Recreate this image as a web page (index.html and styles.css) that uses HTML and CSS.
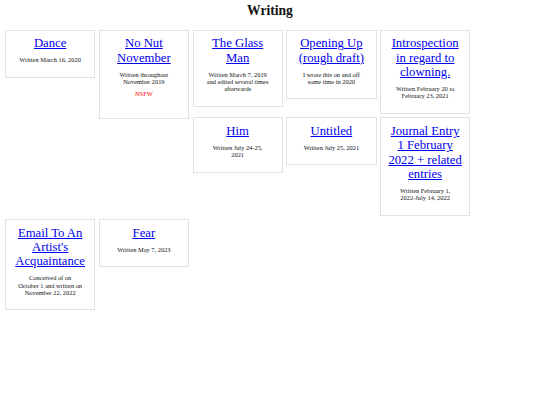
FILE: index.html
```html
<!DOCTYPE html>
<html lang="en">
<head>
    <meta charset="UTF-8">
    <meta name="viewport" content="width=device-width, initial-scale=1.0">
    <title>Writing</title>
    <link rel="stylesheet" href="styles.css">
</head>
<body>
    <h1>Writing</h1>

    <main class="pieces">
        <div class="piece">
            <a href="#" class="piece-title">Dance</a>
            <p class="piece-date">Written March 16, 2020</p>
        </div>
        <div class="piece">
            <a href="#" class="piece-title">No Nut November</a>
            <p class="piece-date">Written throughout<br>November 2019</p>
            <p class="nsfw">NSFW</p>
        </div>
        <div class="piece">
            <a href="#" class="piece-title">The Glass Man</a>
            <p class="piece-date">Written March 7, 2019<br>and edited several times<br>afterwards</p>
        </div>
        <div class="piece">
            <a href="#" class="piece-title">Opening Up (rough draft)</a>
            <p class="piece-date">I wrote this on and off<br>some time in 2020</p>
        </div>
        <div class="piece">
            <a href="#" class="piece-title">Introspection in regard to clowning.</a>
            <p class="piece-date">Written February 20 to<br>February 23, 2021</p>
        </div>
        <div class="piece">
            <a href="#" class="piece-title">Him</a>
            <p class="piece-date">Written July 24-25,<br>2021</p>
        </div>
        <div class="piece">
            <a href="#" class="piece-title">Untitled</a>
            <p class="piece-date">Written July 25, 2021</p>
        </div>
        <div class="piece">
            <a href="#" class="piece-title">Journal Entry 1 February 2022 + related entries</a>
            <p class="piece-date">Written February 1,<br>2022-July 14, 2022</p>
        </div>
        <div class="piece">
            <a href="#" class="piece-title">Email To An Artist's Acquaintance</a>
            <p class="piece-date">Conceived of on<br>October 1 and written on<br>November 22, 2022</p>
        </div>
        <div class="piece">
            <a href="#" class="piece-title">Fear</a>
            <p class="piece-date">Written May 7, 2023</p>
        </div>
    </main>
</body>
</html>
```

FILE: styles.css
```css
* {
    box-sizing: border-box;
}

body {
    margin: 0;
    font-family: "Liberation Serif", "Times New Roman", serif;
    color: #111;
    background-color: #fff;
}

h1 {
    font-size: 13.6px;
    line-height: 15.6px;
    text-align: center;
    margin: 2.7px 0 9.55px;
}

.pieces {
    padding: 0 3.25px;
}

.piece {
    float: left;
    width: 90.25px;
    margin: 1.75px;
    padding: 5.8px 6.4px 13.1px;
    border: 1px solid #e2e2e2;
    text-align: center;
}

.piece-title {
    display: block;
    font-size: 12.7px;
    line-height: 14.3px;
    color: #0000ee;
    text-decoration: underline;
}

.piece-date {
    font-size: 6.4px;
    line-height: 7.3px;
    margin: 5.7px 0 0;
    white-space: nowrap;
}

.nsfw {
    font-size: 6.4px;
    line-height: 7.3px;
    color: #f00;
    margin: 4.4px 0 8px;
}
```
